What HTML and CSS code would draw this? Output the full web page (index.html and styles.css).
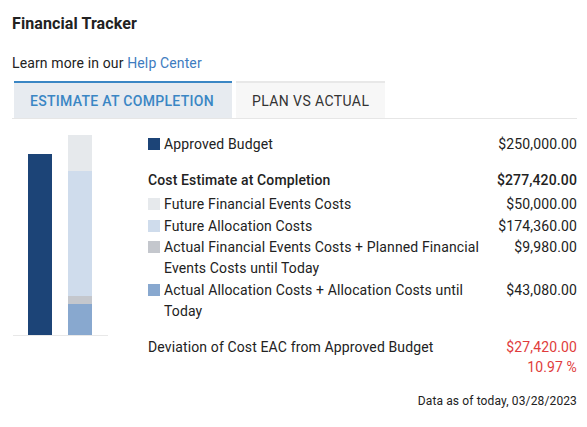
FILE: index.html
```html
<!DOCTYPE html>
<html>
<head>
<meta charset="utf-8">
<link rel="stylesheet" href="styles.css">
</head>
<body>
<div class="widget">
  <h1 class="title">Financial Tracker</h1>
  <p class="help">Learn more in our <a class="link" href="#">Help Center</a></p>
  <div class="tabs">
    <div class="tab active">ESTIMATE AT COMPLETION</div>
    <div class="tab">PLAN VS ACTUAL</div>
  </div>
  <div class="content">
    <div class="chart">
      <div class="bars">
        <div class="bar">
          <div class="seg c-budget" style="height:181px"></div>
        </div>
        <div class="bar">
          <div class="seg c-ffe" style="height:36px"></div>
          <div class="seg c-fac" style="height:125px"></div>
          <div class="seg c-afe" style="height:8px"></div>
          <div class="seg c-aac" style="height:31px"></div>
        </div>
      </div>
    </div>
    <div class="details">
      <div class="row">
        <span class="swatch c-budget"></span>
        <span class="label">Approved Budget</span>
        <span class="value">$250,000.00</span>
      </div>
      <div class="row heading">
        <span class="label">Cost Estimate at Completion</span>
        <span class="value">$277,420.00</span>
      </div>
      <div class="group">
        <div class="row">
          <span class="swatch c-ffe"></span>
          <span class="label">Future Financial Events Costs</span>
          <span class="value">$50,000.00</span>
        </div>
        <div class="row">
          <span class="swatch c-fac"></span>
          <span class="label">Future Allocation Costs</span>
          <span class="value">$174,360.00</span>
        </div>
        <div class="row">
          <span class="swatch c-afe"></span>
          <span class="label">Actual Financial Events Costs + Planned Financial Events Costs until Today</span>
          <span class="value">$9,980.00</span>
        </div>
        <div class="row">
          <span class="swatch c-aac"></span>
          <span class="label">Actual Allocation Costs + Allocation Costs until Today</span>
          <span class="value">$43,080.00</span>
        </div>
      </div>
      <div class="row deviation">
        <span class="label">Deviation of Cost EAC from Approved Budget</span>
        <span class="value neg">$27,420.00<br>10.97 %</span>
      </div>
    </div>
  </div>
  <div class="footer">Data as of today, 03/28/2023</div>
</div>
</body>
</html>
```

FILE: styles.css
```css
* { box-sizing: border-box; }
html, body { margin: 0; padding: 0; background: #fff; }
body {
  font-family: Roboto, "Liberation Sans", Arial, sans-serif;
  color: #222;
  font-size: 14px;
  letter-spacing: 0.13px;
}
.widget {
  width: 587px;
  padding: 13px 10px 0 12px;
}
.title {
  margin: 0;
  font-size: 16px;
  font-weight: 700;
  line-height: 22px;
  color: #222;
  letter-spacing: 0.1px;
}
.help {
  margin: 18px 0 0 0;
  line-height: 20px;
  font-size: 14px;
  color: #222;
}
.link { color: #3e7cc0; text-decoration: none; }
.tabs {
  margin-top: 8px;
  display: flex;
  gap: 4px;
  padding-left: 2px;
  border-bottom: 1px solid #e6e6e6;
}
.tab {
  height: 37px;
  padding: 0 16px;
  display: flex;
  align-items: center;
  font-size: 14px;
  letter-spacing: 0.4px;
  white-space: nowrap;
  background: #f7f7f7;
  border-top: 2px solid #e8e8e8;
  color: #333;
}
.tab.active {
  width: 218px;
  background: #e7ebf0;
  border-top-color: #3a86c4;
  color: #3a86c4;
  font-weight: 500;
  letter-spacing: 0.3px;
}
.content {
  display: flex;
  padding-top: 15px;
}
.chart {
  width: 95px;
  margin-left: 1px;
  margin-right: 40px;
  padding-top: 1px;
}
.bars {
  display: flex;
  align-items: flex-end;
  gap: 16px;
  padding: 0 15px;
  height: 201px;
  border-bottom: 1px solid #e8e8e8;
}
.bar {
  width: 24px;
  display: flex;
  flex-direction: column;
}
.c-budget { background: #1c4477; }
.c-ffe { background: #e6e9ec; }
.c-fac { background: #cfdcec; }
.c-afe { background: #c4c7cd; }
.c-aac { background: #88a8cf; }
.details {
  flex: 1;
  display: flex;
  flex-direction: column;
}
.row {
  display: flex;
  align-items: flex-start;
  line-height: 21px;
}
.swatch {
  width: 12px;
  height: 12px;
  margin-top: 4px;
  margin-right: 4px;
  flex: none;
}
.label {
  width: 325px;
}
.value {
  margin-left: auto;
  text-align: right;
}
.heading {
  margin-top: 15px;
  font-weight: 500;
}
.heading .label { width: auto; }
.group {
  margin-top: 3px;
  display: flex;
  flex-direction: column;
  gap: 0.5px;
}
.deviation {
  margin-top: 15px;
  line-height: 20px;
}
.deviation .label { width: auto; }
.neg { color: #e03c3c; }
.footer {
  text-align: right;
  font-size: 12px;
  margin-top: 16px;
  line-height: 16px;
  color: #222;
}
```
